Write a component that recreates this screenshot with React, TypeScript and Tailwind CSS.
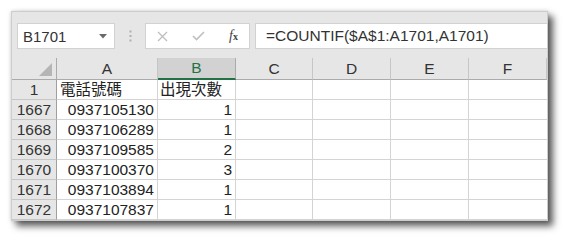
import React from "react";

const cols = [
  { k: "A", w: "w-[101px]" },
  { k: "B", w: "w-[78px]" },
  { k: "C", w: "w-[77px]" },
  { k: "D", w: "w-[78px]" },
  { k: "E", w: "w-[78px]" },
  { k: "F", w: "w-[78px]" },
];

const rows: { n: string; a: string; b: string }[] = [
  { n: "1", a: "電話號碼", b: "出現次數" },
  { n: "1667", a: "0937105130", b: "1" },
  { n: "1668", a: "0937106289", b: "1" },
  { n: "1669", a: "0937109585", b: "2" },
  { n: "1670", a: "0937100370", b: "3" },
  { n: "1671", a: "0937103894", b: "1" },
  { n: "1672", a: "0937107837", b: "1" },
];

export default function App() {
  return (
    <div
      className="w-[567px] h-[241px] bg-white pl-[11px] pt-[11px] text-[15.5px] text-[#222]"
      style={{ fontFamily: '"Liberation Sans", "Noto Sans CJK TC", sans-serif' }}
    >
      <div className="w-[537px] border border-[#cdcdcd] bg-white shadow-[5px_5px_7px_rgba(0,0,0,0.65),0_0_4px_rgba(0,0,0,0.15)]">
        {/* formula bar area */}
        <div className="h-[46px] bg-[#e6e6e6] pt-[11px] pl-[5px] flex">
          <div className="w-[98px] h-[26px] bg-white border border-[#d2d2d2] flex items-center pl-[5px] pr-[7px] justify-between">
            <span className="leading-none text-[#333] text-[15px]">B1701</span>
            <svg width="8" height="5" viewBox="0 0 8 5">
              <polygon points="0,0 8,0 4,4.5" fill="#6a6a6a" />
            </svg>
          </div>
          <div className="w-[30px] h-[26px] flex items-center justify-center">
            <svg width="3" height="12" viewBox="0 0 3 12">
              <rect x="0.5" y="0.5" width="2" height="2" fill="#b0b0b0" />
              <rect x="0.5" y="5" width="2" height="2" fill="#b0b0b0" />
              <rect x="0.5" y="9.5" width="2" height="2" fill="#b0b0b0" />
            </svg>
          </div>
          <div className="w-[105px] h-[26px] bg-white border border-[#d2d2d2] flex items-center">
            <svg className="ml-[11px]" width="11" height="11" viewBox="0 0 11 11">
              <path d="M1 1 L10 10 M10 1 L1 10" stroke="#bfbfbf" strokeWidth="1.4" />
            </svg>
            <svg className="ml-[24px]" width="13" height="10" viewBox="0 0 13 10">
              <path d="M1 5 L4.5 8.5 L12 1" stroke="#bfbfbf" strokeWidth="1.6" fill="none" />
            </svg>
            <span
              className="ml-[24px] text-[#444] italic leading-none text-[14px]"
              style={{ fontFamily: '"Liberation Serif", serif' }}
            >
              f<span className="text-[10px] not-italic font-bold">x</span>
            </span>
          </div>
          <div className="ml-[5px] flex-1 h-[26px] bg-white border border-[#d2d2d2] border-r-0 flex items-center pl-[10px]">
            <span className="leading-none text-[#333]">=COUNTIF($A$1:A1701,A1701)</span>
          </div>
        </div>
        {/* header row */}
        <div className="flex h-[22px] bg-[#e6e6e6]">
          <div className="w-[45px] h-full border-r border-b border-[#ababab] flex items-end justify-end pr-[4px] pb-[3px]">
            <svg width="13" height="13" viewBox="0 0 13 13">
              <polygon points="13,0 13,13 0,13" fill="#b5b5b5" />
            </svg>
          </div>
          {cols.map((c) =>
            c.k === "B" ? (
              <div
                key={c.k}
                className={`${c.w} h-full bg-[#d2d2d2] border-r border-[#ababab] border-b-2 border-b-[#217346] flex items-center justify-center text-[#217346] leading-none`}
              >
                {c.k}
              </div>
            ) : (
              <div
                key={c.k}
                className={`${c.w} h-full border-r border-b border-[#c6c6c6] border-b-[#ababab] flex items-center justify-center text-[#333] leading-none`}
              >
                {c.k}
              </div>
            )
          )}
        </div>
        {rows.map((r, i) => (
          <div key={r.n} className="flex h-[20px]">
            <div className="w-[45px] h-full bg-[#e6e6e6] border-r border-r-[#9f9f9f] border-b border-b-[#c6c6c6] flex items-center justify-center text-[#333] leading-none">
              {r.n}
            </div>
            <div
              className={`w-[101px] h-full border-r border-b border-[#d4d4d4] flex items-center leading-none ${
                i === 0 ? "justify-start pl-[3px]" : "justify-end pr-[3px]"
              }`}
            >
              {r.a}
            </div>
            <div
              className={`w-[78px] h-full border-r border-b border-[#d4d4d4] flex items-center leading-none ${
                i === 0 ? "justify-start pl-[2px]" : "justify-end pr-[3px]"
              }`}
            >
              {r.b}
            </div>
            <div className="w-[77px] h-full border-r border-b border-[#d4d4d4]" />
            <div className="w-[78px] h-full border-r border-b border-[#d4d4d4]" />
            <div className="w-[78px] h-full border-r border-b border-[#d4d4d4]" />
            <div className="w-[78px] h-full border-b border-[#d4d4d4]" />
          </div>
        ))}
      </div>
    </div>
  );
}
